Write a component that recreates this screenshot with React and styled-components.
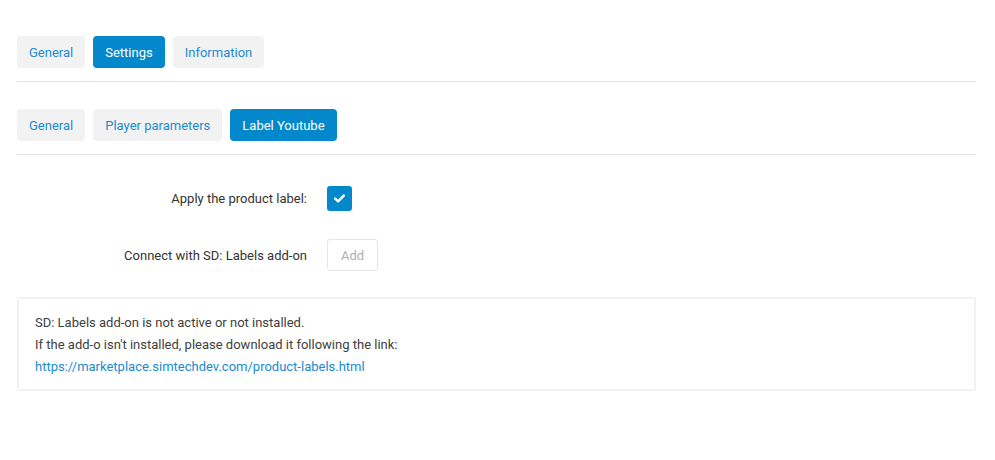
import React from 'react';
import styled, { createGlobalStyle } from 'styled-components';

const GlobalStyle = createGlobalStyle`
  body {
    margin: 0;
    background: #fff;
    font-family: Roboto, "Liberation Sans", sans-serif;
    font-size: 13px;
    color: #333;
  }
`;

const Page = styled.div`
  padding: 36px 19px 0 17px;
`;

const TabBar = styled.div`
  display: flex;
  gap: 8px;
  padding-bottom: 13px;
  border-bottom: 1px solid #e3e3e3;
  margin-bottom: ${p => p.$space}px;
`;

const Tab = styled.button`
  height: 32px;
  padding: 0 12px;
  border: 0;
  border-radius: 4px;
  font-family: inherit;
  font-size: 13px;
  cursor: pointer;
  background: ${p => (p.$active ? '#0388cc' : '#f2f2f2')};
  color: ${p => (p.$active ? '#fff' : '#1f8ad0')};
`;

const Form = styled.div`
  display: flex;
  flex-direction: column;
  gap: 28px;
  padding-top: 31px;
`;

const Row = styled.div`
  display: flex;
  align-items: center;
  gap: 20px;
`;

const Label = styled.div`
  width: 290px;
  text-align: right;
  color: #333;
`;

const Check = styled.div`
  width: 25px;
  height: 25px;
  border-radius: 3px;
  background: #0388cc;
  display: flex;
  align-items: center;
  justify-content: center;
`;

const AddButton = styled.button`
  height: 32px;
  width: 51px;
  border: 1px solid #e6e6e6;
  border-radius: 3px;
  background: #fff;
  color: #b0b0b0;
  font-family: inherit;
  font-size: 13px;
`;

const Notice = styled.div`
  margin: 26px 0 0 0;
  border: 2px solid #f1f1f1;
  border-radius: 2px;
  padding: 13px 16px 11px;
  line-height: 22px;
  color: #404040;
`;

const NoticeLink = styled.a`
  color: #1a8ad2;
  text-decoration: none;
`;

export default function App() {
  return (
    <>
      <GlobalStyle />
      <Page>
        <TabBar $space={27}>
          <Tab>General</Tab>
          <Tab $active>Settings</Tab>
          <Tab>Information</Tab>
        </TabBar>
        <TabBar $space={0}>
          <Tab>General</Tab>
          <Tab>Player parameters</Tab>
          <Tab $active>Label Youtube</Tab>
        </TabBar>
        <Form>
          <Row>
            <Label>Apply the product label:</Label>
            <Check>
              <svg width="11" height="9" viewBox="0 0 11 9">
                <path d="M1.2 4.6 L4.1 7.4 L9.8 1.6" fill="none" stroke="#fff" strokeWidth="2.4" strokeLinecap="round" strokeLinejoin="round" />
              </svg>
            </Check>
          </Row>
          <Row>
            <Label>Connect with SD: Labels add-on</Label>
            <AddButton>Add</AddButton>
          </Row>
        </Form>
        <Notice>
          <div>SD: Labels add-on is not active or not installed.</div>
          <div>If the add-o isn't installed, please download it following the link:</div>
          <NoticeLink href="#">https://marketplace.simtechdev.com/product-labels.html</NoticeLink>
        </Notice>
      </Page>
    </>
  );
}
